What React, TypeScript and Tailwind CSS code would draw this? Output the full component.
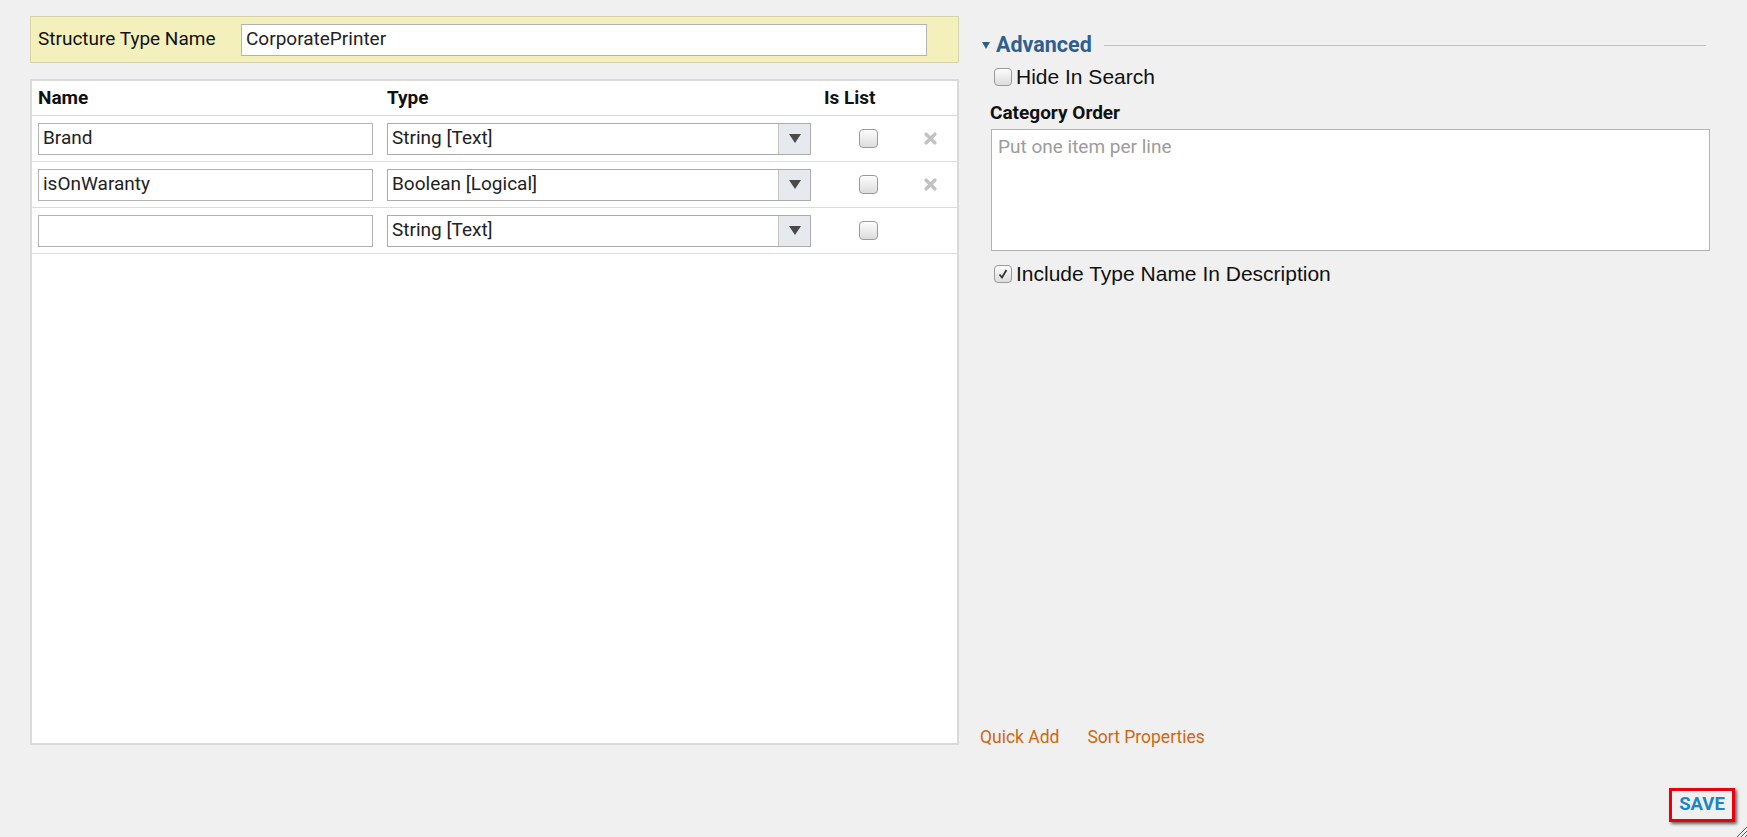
import React from 'react'

const roboto = { fontFamily: 'Roboto, "Liberation Sans", sans-serif' }
const arial = { fontFamily: '"Liberation Sans", Arial, sans-serif' }

function Check({ checked = false, size = 'w-[19px] h-[19px]' }: { checked?: boolean; size?: string }) {
  return (
    <span
      className={`${size} inline-flex items-center justify-center rounded-[4px] border border-[#9a9a9a] bg-gradient-to-b from-[#fdfdfd] to-[#dcdcdc] shadow-[inset_0_1px_0_#fff]`}
    >
      {checked && (
        <svg viewBox="0 0 12 12" className="w-[12px] h-[12px]">
          <path d="M2.5 6.5 L5 9.5 L9.5 2" fill="none" stroke="#333" strokeWidth="1.8" />
        </svg>
      )}
    </span>
  )
}

function Remove() {
  return (
    <svg viewBox="0 0 12 12" className="w-[13px] h-[13px]">
      <path d="M2 2 L10 10 M10 2 L2 10" stroke="#c2c2c2" strokeWidth="3.2" strokeLinecap="round" />
    </svg>
  )
}

function TypeSelect({ value }: { value: string }) {
  return (
    <div className="ml-[14px] w-[424px] h-[32px] flex border border-[#ababab] bg-white">
      <div className="flex-1 px-[4px] flex items-center text-[19px] text-[#222]">{value}</div>
      <div className="w-[32px] border-l border-[#c4c4c4] bg-[#e6eaee] flex items-center justify-center">
        <svg viewBox="0 0 12 10" className="w-[12px] h-[10px]">
          <path d="M0 0 H12 L6 9 Z" fill="#4a4a4a" />
        </svg>
      </div>
    </div>
  )
}

const rows = [
  { name: 'Brand', type: 'String [Text]', remove: true },
  { name: 'isOnWaranty', type: 'Boolean [Logical]', remove: true },
  { name: '', type: 'String [Text]', remove: false },
]

export default function App() {
  return (
    <div className="w-full h-[837px] bg-[#f0f0f0] flex flex-col overflow-hidden relative" style={roboto}>
      <div className="flex pl-[30px] pt-[16px]">
        {/* left: structure name + properties table */}
        <div className="w-[929px] flex flex-col">
          <div className="h-[47px] bg-[#f3f0bb] border border-[#d6d4ac] flex items-center pl-[7px]">
            <span className="text-[19px] text-[#111] w-[203px]">Structure Type Name</span>
            <div className="w-[686px] h-[32px] border border-[#b3b3b3] bg-white flex items-center px-[4px] text-[19px] text-[#222]">
              CorporatePrinter
            </div>
          </div>

          <div className="mt-[16px] h-[666px] bg-white border-2 border-[#dadada] flex flex-col">
            <div className="h-[35px] flex items-center border-b border-[#dcdcdc] text-[19px] font-bold text-[#111]">
              <span className="ml-[6px] w-[349px]">Name</span>
              <span className="w-[437px]">Type</span>
              <span>Is List</span>
            </div>
            {rows.map((r, i) => (
              <div key={i} className="h-[46px] flex items-center border-b border-[#dcdcdc]">
                <div className="ml-[6px] w-[335px] h-[32px] border border-[#b3b3b3] bg-white flex items-center px-[4px] text-[19px] text-[#222]">
                  {r.name}
                </div>
                <TypeSelect value={r.type} />
                <span className="ml-[48px] flex">
                  <Check />
                </span>
                {r.remove && (
                  <span className="ml-[46px] flex">
                    <Remove />
                  </span>
                )}
              </div>
            ))}
          </div>
        </div>

        {/* right: advanced settings */}
        <div className="ml-[21px] w-[730px] flex flex-col">
          <div className="mt-[17px] h-[24px] flex items-center">
            <svg viewBox="0 0 8 7" className="ml-[2px] w-[8px] h-[7px]">
              <path d="M0 0 H8 L4 7 Z" fill="#2f5f8e" />
            </svg>
            <span className="ml-[6px] text-[21.5px] font-bold text-[#2f5f8e]">Advanced</span>
            <div className="ml-[12px] flex-1 mr-[4px] h-px bg-[#b9c3d0]" />
          </div>

          <div className="mt-[8px] h-[24px] flex items-center pl-[14px]">
            <Check size="w-[18px] h-[18px]" />
            <span className="ml-[4px] text-[21px] text-[#111]" style={arial}>Hide In Search</span>
          </div>

          <div className="mt-[13px] h-[22px] flex items-center pl-[10px] text-[19px] font-bold text-[#111]">
            Category Order
          </div>

          <div className="mt-[5px] ml-[11px] h-[122px] border border-[#b3b3b3] bg-white px-[6px] pt-[3px] text-[19px] text-[#9c9c9c]">
            Put one item per line
          </div>

          <div className="mt-[11px] h-[24px] flex items-center pl-[14px]">
            <Check checked size="w-[18px] h-[18px]" />
            <span className="ml-[4px] text-[21px] text-[#111]" style={arial}>
              Include Type Name In Description
            </span>
          </div>

          <div className="flex-1" />

          <div className="h-[16px] flex items-center text-[17.5px] text-[#d0680e]">
            <span>Quick Add</span>
            <span className="ml-[28px]">Sort Properties</span>
          </div>
        </div>
      </div>

      {/* footer */}
      <div className="flex justify-end pr-[12px] pt-[43px]">
        <div className="w-[66px] h-[34px] border-[3px] border-[#e8000b] shadow-[2px_2px_3px_rgba(0,0,0,0.6)] flex items-center justify-center text-[18.5px] font-bold text-[#1a86c8]">
          SAVE
        </div>
      </div>

      {/* resize grip */}
      <svg viewBox="0 0 12 12" className="absolute right-0 bottom-0 w-[12px] h-[12px]">
        <path d="M12 2 L2 12 M12 6 L6 12 M12 10 L10 12" stroke="#555" strokeWidth="1" />
      </svg>
    </div>
  )
}
